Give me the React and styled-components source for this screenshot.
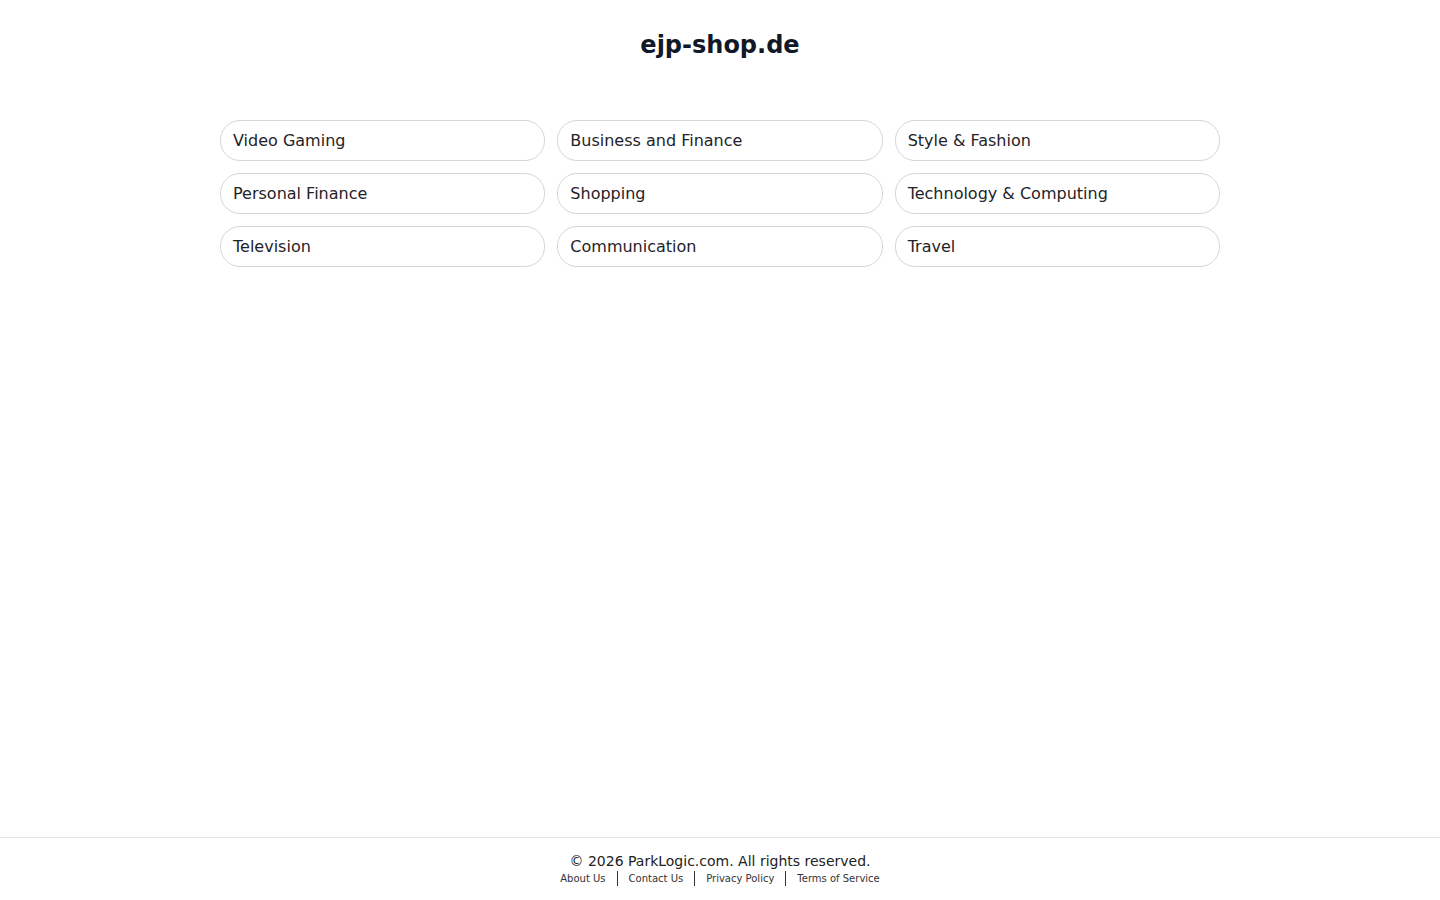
import React from "react"
import styled, { createGlobalStyle } from "styled-components"

const GlobalStyle = createGlobalStyle`
  html, body {
    margin: 0;
    padding: 0;
    background: #fff;
  }
  body {
    font-family: "DejaVu Sans", "Liberation Sans", sans-serif;
    color: #1f2328;
  }
  * {
    box-sizing: border-box;
  }
`

const Page = styled.div`
  min-height: 100vh;
  display: flex;
  flex-direction: column;
`

const Main = styled.main`
  flex: 1;
  display: flex;
  flex-direction: column;
  align-items: center;
  padding-top: 31px;
`

const Title = styled.h1`
  margin: 0;
  font-size: 24px;
  line-height: 29px;
  font-weight: 700;
  color: #111827;
`

const Grid = styled.div`
  margin-top: 60px;
  width: 1000px;
  display: grid;
  grid-template-columns: repeat(3, 1fr);
  gap: 12px;
`

const Topic = styled.a`
  display: flex;
  align-items: center;
  height: 41px;
  padding: 0 12px;
  border: 1px solid #d6d6d6;
  border-radius: 20px;
  font-size: 16px;
  color: #1f2328;
  text-decoration: none;
  cursor: pointer;

  &:hover {
    background: #f7f7f7;
  }
`

const Footer = styled.footer`
  border-top: 1px solid #e5e5e5;
  padding: 14px 0 14px;
  display: flex;
  flex-direction: column;
  align-items: center;
`

const Copyright = styled.div`
  font-size: 14px;
  line-height: 18px;
  color: #222;
`

const Links = styled.nav`
  display: flex;
  align-items: center;
  height: 16px;
`

const FooterLink = styled.a`
  font-size: 10px;
  line-height: 15px;
  color: #333;
  text-decoration: none;
  padding: 0 11px;
  border-left: ${({ $first }) => ($first ? "none" : "1.5px solid #333")};
`

const topics = [
  "Video Gaming",
  "Business and Finance",
  "Style & Fashion",
  "Personal Finance",
  "Shopping",
  "Technology & Computing",
  "Television",
  "Communication",
  "Travel",
]

const links = ["About Us", "Contact Us", "Privacy Policy", "Terms of Service"]

const App = () => {
  return (
    <Page>
      <GlobalStyle />
      <Main>
        <Title>ejp-shop.de</Title>
        <Grid>
          {topics.map((t) => (
            <Topic key={t}>{t}</Topic>
          ))}
        </Grid>
      </Main>
      <Footer>
        <Copyright>© 2026 ParkLogic.com. All rights reserved.</Copyright>
        <Links>
          {links.map((l, i) => (
            <FooterLink key={l} $first={i === 0}>
              {l}
            </FooterLink>
          ))}
        </Links>
      </Footer>
    </Page>
  )
}

export default App
